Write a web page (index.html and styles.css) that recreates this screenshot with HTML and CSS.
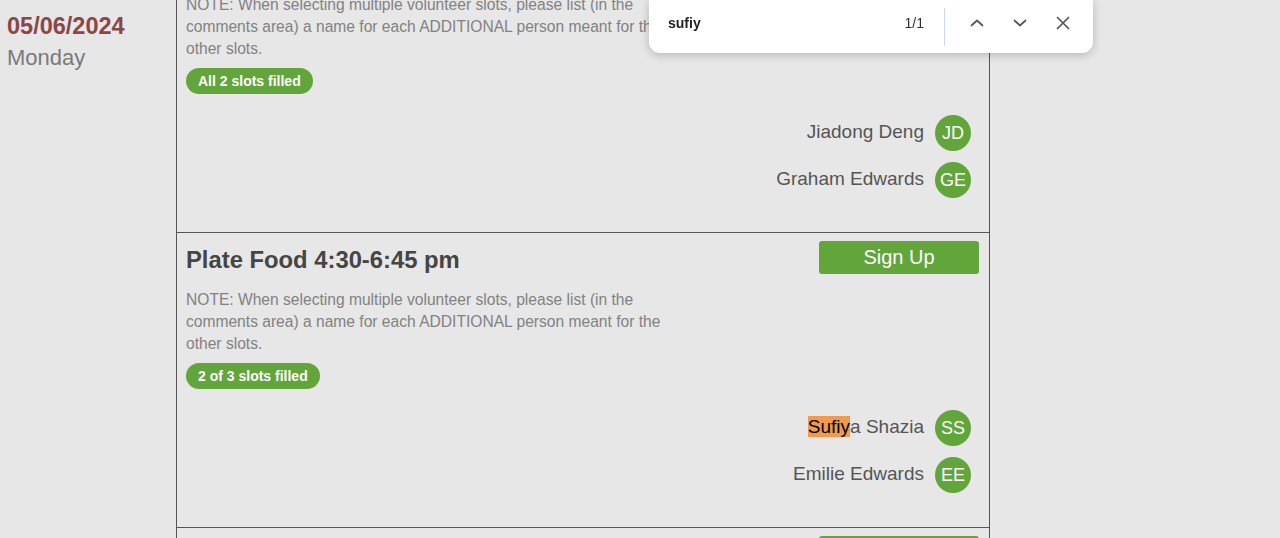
FILE: index.html
```html
<!DOCTYPE html>
<html>
<head>
<meta charset="utf-8">
<link rel="stylesheet" href="styles.css">
</head>
<body>
<div class="page">
  <div class="date-col">
    <div class="date">05/06/2024</div>
    <div class="day">Monday</div>
  </div>
  <div class="slots">
    <div class="slot">
      <div class="slot-head">
        <div class="title">Serve Food 4:30-6:45 pm</div>
        <button class="signup">Sign Up</button>
      </div>
      <p class="note">NOTE: When selecting multiple volunteer slots, please list (in the comments area) a name for each ADDITIONAL person meant for the other slots.</p>
      <span class="badge">All 2 slots filled</span>
      <ul class="vols">
        <li class="vol"><span class="name">Jiadong Deng</span><span class="avatar">JD</span></li>
        <li class="vol"><span class="name">Graham Edwards</span><span class="avatar">GE</span></li>
      </ul>
    </div>
    <div class="slot">
      <div class="slot-head">
        <div class="title">Plate Food 4:30-6:45 pm</div>
        <button class="signup">Sign Up</button>
      </div>
      <p class="note">NOTE: When selecting multiple volunteer slots, please list (in the comments area) a name for each ADDITIONAL person meant for the other slots.</p>
      <span class="badge">2 of 3 slots filled</span>
      <ul class="vols">
        <li class="vol"><span class="name"><mark class="hit">Sufiy</mark>a Shazia</span><span class="avatar">SS</span></li>
        <li class="vol"><span class="name">Emilie Edwards</span><span class="avatar">EE</span></li>
      </ul>
    </div>
    <div class="slot">
      <div class="slot-head">
        <div class="title">Clean Up 6:45-7:30 pm</div>
        <button class="signup">Sign Up</button>
      </div>
    </div>
  </div>
</div>
<div class="findbar">
  <span class="find-text">sufiy</span>
  <span class="find-count">1/1</span>
  <span class="find-sep"></span>
  <span class="find-btn">
    <svg width="18" height="18" viewBox="0 0 18 18"><path d="M3.5 11.5 L9 6.5 L14.5 11.5" fill="none" stroke="#555" stroke-width="1.7" stroke-linecap="round" stroke-linejoin="round"/></svg>
  </span>
  <span class="find-btn">
    <svg width="18" height="18" viewBox="0 0 18 18"><path d="M3.5 6.5 L9 11.5 L14.5 6.5" fill="none" stroke="#555" stroke-width="1.7" stroke-linecap="round" stroke-linejoin="round"/></svg>
  </span>
  <span class="find-btn">
    <svg width="18" height="18" viewBox="0 0 18 18"><path d="M3.5 3.5 L14.5 14.5 M14.5 3.5 L3.5 14.5" fill="none" stroke="#555" stroke-width="1.7" stroke-linecap="round"/></svg>
  </span>
</div>
</body>
</html>
```

FILE: styles.css
```css
html, body {
  margin: 0;
  padding: 0;
  background: #e7e7e7;
  font-family: "Liberation Sans", Arial, sans-serif;
  overflow: hidden;
}

.page {
  display: flex;
  align-items: flex-start;
}

.date-col {
  width: 176px;
  flex: none;
  box-sizing: border-box;
  padding: 11px 0 0 7px;
}

.date {
  font-size: 23.5px;
  font-weight: bold;
  color: #8c4646;
  line-height: 30px;
}

.day {
  font-size: 22px;
  color: #7a7a7a;
  line-height: 26px;
  margin-top: 4px;
}

.slots {
  width: 814px;
  flex: none;
  margin-top: -62px;
}

.slot {
  border: 1px solid #555;
  border-top: none;
  padding: 8px 10px 34px 9px;
  display: flex;
  flex-direction: column;
  align-items: flex-start;
}

.slot-head {
  display: flex;
  justify-content: space-between;
  align-items: center;
  align-self: stretch;
}

.title {
  font-size: 23.8px;
  font-weight: bold;
  color: #454545;
  padding-top: 5px;
}

.signup {
  width: 160px;
  height: 33px;
  border: none;
  border-radius: 3px;
  background: #62a53a;
  color: #fff;
  font-family: "Liberation Sans", Arial, sans-serif;
  font-size: 20px;
  padding: 0;
}

.note {
  margin: 15px 0 0;
  max-width: 490px;
  font-size: 15.6px;
  line-height: 22px;
  color: #828282;
}

.badge {
  margin-top: 8px;
  height: 26px;
  line-height: 26px;
  padding: 0 12px;
  border-radius: 13px;
  background: #62a53a;
  color: #fff;
  font-size: 14px;
  font-weight: bold;
}

.vols {
  list-style: none;
  margin: 21px 0 0;
  padding: 0 8px 0 0;
  align-self: stretch;
  display: flex;
  flex-direction: column;
  align-items: flex-end;
  gap: 11px;
}

.vol {
  display: flex;
  align-items: center;
  gap: 11px;
}

.name {
  font-size: 19px;
  color: #555;
  padding-bottom: 3px;
}

.hit {
  background: #f19a4d;
  color: #000;
}

.avatar {
  width: 36px;
  height: 36px;
  border-radius: 50%;
  background: #62a53a;
  color: #fff;
  font-size: 18px;
  display: flex;
  align-items: center;
  justify-content: center;
}

.findbar {
  position: fixed;
  top: 0;
  left: 649px;
  width: 444px;
  height: 53px;
  box-sizing: border-box;
  background: #fff;
  border-radius: 0 0 11px 11px;
  box-shadow: 0 2px 10px rgba(0, 0, 0, 0.22);
  display: flex;
  align-items: center;
  padding: 0 9px 8px 19px;
}

.find-text {
  flex: 1;
  font-size: 14px;
  font-weight: bold;
  color: #222;
}

.find-count {
  font-size: 14px;
  color: #333;
  margin-right: 20px;
}

.find-sep {
  width: 1px;
  height: 38px;
  background: #c9d9f1;
  margin: 8px 10px 0 0;
}

.find-btn {
  width: 43px;
  display: flex;
  justify-content: center;
}
```
